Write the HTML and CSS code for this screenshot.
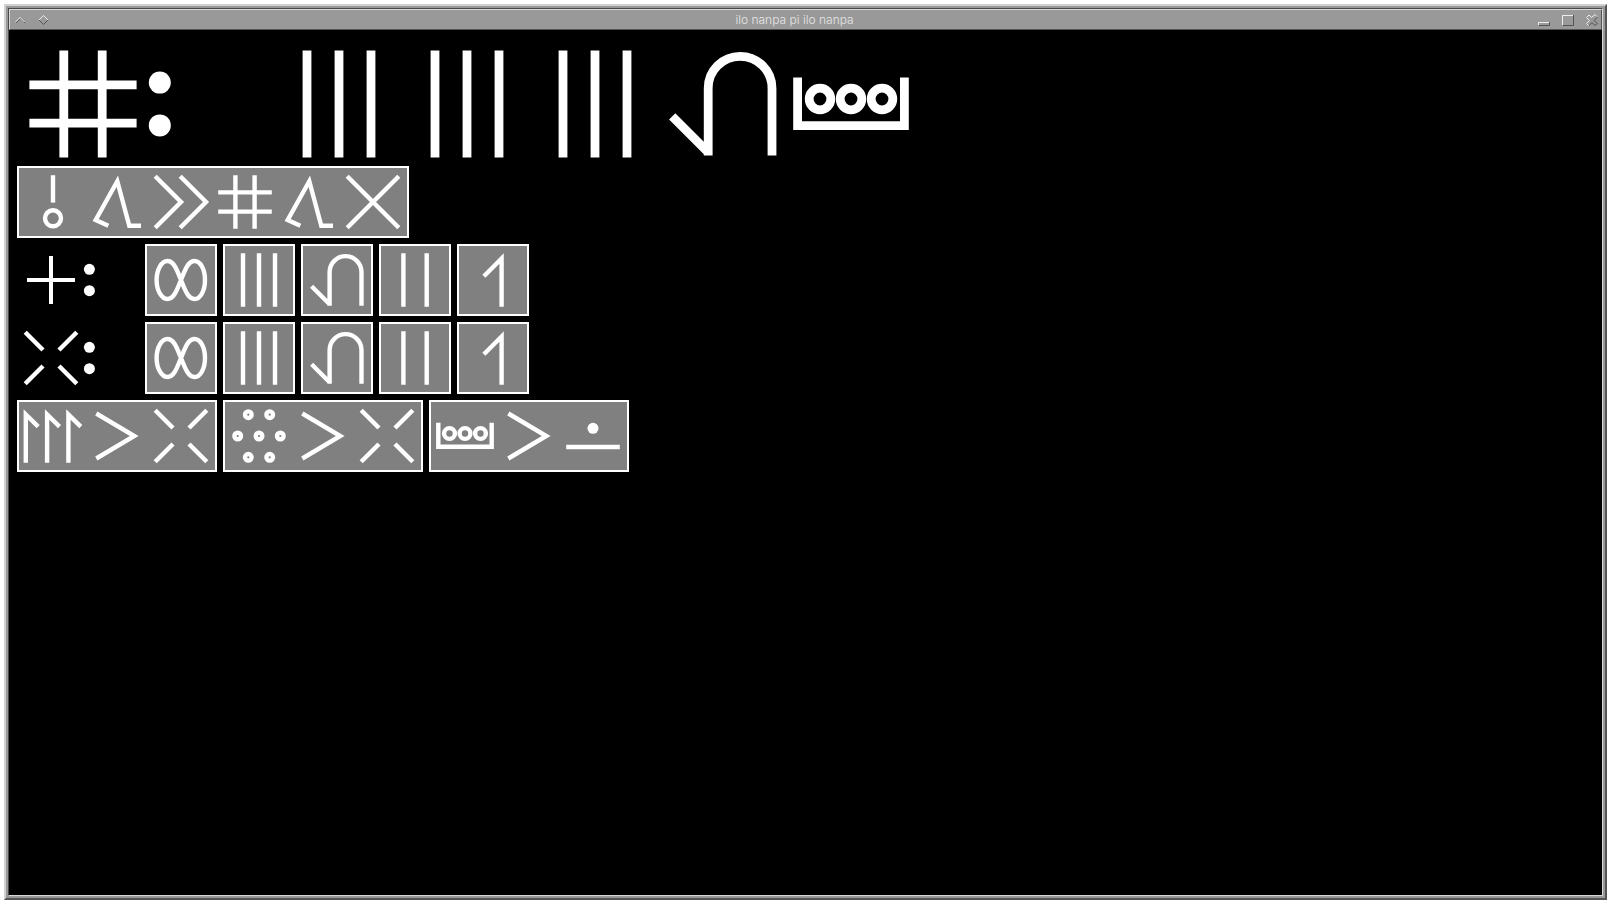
FILE: index.html
```html
<!DOCTYPE html>
<html lang="tok">
<head>
<meta charset="utf-8">
<title>ilo nanpa pi ilo nanpa</title>
<link rel="stylesheet" href="styles.css">
</head>
<body>
<svg class="defs" aria-hidden="true">
  <defs>
    <symbol id="hash" overflow="visible"><path d="M22.4 5.2V58.8M41.6 5.2V58.8M5.2 22.4H58.8M5.2 41.6H58.8"/></symbol>
    <symbol id="colon" overflow="visible"><g class="solid"><circle cx="6.4" cy="21.3" r="5.5"/><circle cx="6.4" cy="42.7" r="5.5"/></g></symbol>
    <symbol id="three" overflow="visible"><path d="M16 5.2V58.8M32 5.2V58.8M48 5.2V58.8"/></symbol>
    <symbol id="two" overflow="visible"><path d="M20.4 5.2V58.8M43.7 5.2V58.8"/></symbol>
    <symbol id="one" overflow="visible"><path d="M40.6 58.8V10.5L22.9 28.2"/></symbol>
    <symbol id="arch" overflow="visible"><path d="M6.6 38.2L24.6 56.2M24.6 57.8V24.1A15.95 15.95 0 0 1 56.5 24.1V57.8"/></symbol>
    <symbol id="box" overflow="visible"><path d="M5.3 18.8V42.8H58.7V18.8"/><circle cx="16.5" cy="29.5" r="5.4"/><circle cx="32" cy="29.5" r="5.4"/><circle cx="47.5" cy="29.5" r="5.4"/></symbol>
    <symbol id="bang" overflow="visible"><path d="M32 5.2V32.6"/><circle cx="32" cy="48.3" r="8"/></symbol>
    <symbol id="legs" overflow="visible"><path d="M23.3 55.7L10.7 50L32.3 11.2L44.3 55.7H56"/></symbol>
    <symbol id="chevrons" overflow="visible"><path d="M6.2 6.2L32 32L6.2 57.8M31.2 6.2L57 32L31.2 57.8"/></symbol>
    <symbol id="cross" overflow="visible"><path d="M6.2 6.2L57.8 57.8M57.8 6.2L6.2 57.8"/></symbol>
    <symbol id="plus" overflow="visible"><path class="thin" d="M8 32H56M32 8V56"/></symbol>
    <symbol id="rays" overflow="visible"><path d="M6.2 6.2L24 24M57.8 6.2L40 24M6.2 57.8L24 40M57.8 57.8L40 40"/></symbol>
    <symbol id="infinity" overflow="visible"><path d="M32 32C28 22 25 13 18.4 13C12.6 13 7.600 21.5 7.600 32C7.600 42.5 12.6 51 18.4 51C25 51 28 42 32 32C36 22 39 13 45.6 13C51.4 13 56 21.5 56 32C56 42.5 51.4 51 45.6 51C39 51 36 42 32 32Z"/></symbol>
    <symbol id="flags" overflow="visible"><path d="M4.8 58.8V10.5L17.2 22.6M26.1 58.8V10.5L38.5 22.6M47.4 58.8V10.5L59.8 22.6"/></symbol>
    <symbol id="greater" overflow="visible"><path d="M11.3 9.5L49.3 32L11.3 54.5"/></symbol>
    <symbol id="beads" overflow="visible"><circle cx="21.3" cy="10.7" r="3.3"/><circle cx="42.7" cy="10.7" r="3.3"/><circle cx="10.7" cy="32" r="3.3"/><circle cx="32" cy="32" r="3.3"/><circle cx="53.3" cy="32" r="3.3"/><circle cx="21.3" cy="53.3" r="3.3"/><circle cx="42.7" cy="53.3" r="3.3"/></symbol>
    <symbol id="above" overflow="visible"><circle class="solid" cx="32" cy="24.3" r="5.5"/><path d="M5.2 43H58.8"/></symbol>
  </defs>
</svg>
<div class="frame">
  <div class="bevel">
    <header class="titlebar">
      <div class="controls">
        <button class="control" aria-label="Menu"><svg class="icon" viewBox="0 0 12 12"><path class="dark" d="M1 9L5.500 4.500L10 9"/><path class="light" d="M.5 8L5 3.500L9.500 8"/></svg></button>
        <button class="control" aria-label="Stick"><svg class="icon" viewBox="0 0 12 12"><path class="light" d="M0 6L4.500 1.500L9 6"/><path class="dark" d="M0 6L4.500 10.500L9 6"/></svg></button>
      </div>
      <h1 class="title">ilo nanpa pi ilo nanpa</h1>
      <div class="controls">
        <button class="control" aria-label="Minimize"><svg class="icon" viewBox="0 0 12 12"><path class="light" d="M.5 11V8.500H11"/><path class="dark" d="M1 11.500H11.500V8"/></svg></button>
        <button class="control" aria-label="Maximize"><svg class="icon" viewBox="0 0 12 12"><path class="light" d="M.5 11V1.500H11"/><path class="dark" d="M1 11.500H11.500V1"/></svg></button>
        <button class="control" aria-label="Close"><svg class="icon" viewBox="0 0 12 12"><path class="light" d="M5.500 3.500L3 1L.5 3.500L3.500 6.500L.5 9.500L2.500 11.500M5.500 3.500L9 .5L11 2.500"/><path class="dark" d="M11.500 3L8 6.500L11.500 9.500L9 11.500L6 8.700L3 11.500"/></svg></button>
      </div>
    </header>
    <main class="calculator">
      <div class="display" role="img" aria-label="nanpa">
        <svg class="digit" viewBox="0 -1 64 61"><use href="#hash"/></svg>
        <svg class="digit" viewBox="0 -1 64 61"><use href="#colon"/></svg>
        <svg class="digit" viewBox="0 -1 64 61"><use href="#three"/></svg>
        <svg class="digit" viewBox="0 -1 64 61"><use href="#three"/></svg>
        <svg class="digit" viewBox="0 -1 64 61"><use href="#three"/></svg>
        <svg class="digit" viewBox="0 -1 64 61"><use href="#arch"/></svg>
        <svg class="digit" viewBox="0 -1 64 61"><use href="#box"/></svg>
      </div>
      <div class="row">
        <button class="key" aria-label="o tawa nanpa tawa ala"><svg class="glyph"><use href="#bang"/></svg><svg class="glyph"><use href="#legs"/></svg><svg class="glyph"><use href="#chevrons"/></svg><svg class="glyph"><use href="#hash"/></svg><svg class="glyph"><use href="#legs"/></svg><svg class="glyph"><use href="#cross"/></svg></button>
      </div>
      <div class="row">
        <div class="label" role="img" aria-label="en"><svg class="glyph"><use href="#plus"/></svg><svg class="glyph"><use href="#colon"/></svg></div>
        <button class="key" aria-label="ale"><svg class="glyph"><use href="#infinity"/></svg></button>
        <button class="key" aria-label="mute"><svg class="glyph"><use href="#three"/></svg></button>
        <button class="key" aria-label="luka"><svg class="glyph"><use href="#arch"/></svg></button>
        <button class="key" aria-label="tu"><svg class="glyph"><use href="#two"/></svg></button>
        <button class="key" aria-label="wan"><svg class="glyph"><use href="#one"/></svg></button>
      </div>
      <div class="row">
        <div class="label" role="img" aria-label="weka"><svg class="glyph"><use href="#rays"/></svg><svg class="glyph"><use href="#colon"/></svg></div>
        <button class="key" aria-label="ale"><svg class="glyph"><use href="#infinity"/></svg></button>
        <button class="key" aria-label="mute"><svg class="glyph"><use href="#three"/></svg></button>
        <button class="key" aria-label="luka"><svg class="glyph"><use href="#arch"/></svg></button>
        <button class="key" aria-label="tu"><svg class="glyph"><use href="#two"/></svg></button>
        <button class="key" aria-label="wan"><svg class="glyph"><use href="#one"/></svg></button>
      </div>
      <div class="row">
        <button class="key" aria-label="kulupu wan li weka"><svg class="glyph"><use href="#flags"/></svg><svg class="glyph"><use href="#greater"/></svg><svg class="glyph"><use href="#rays"/></svg></button>
        <button class="key" aria-label="ko li weka"><svg class="glyph"><use href="#beads"/></svg><svg class="glyph"><use href="#greater"/></svg><svg class="glyph"><use href="#rays"/></svg></button>
        <button class="key" aria-label="poki li sewi"><svg class="glyph"><use href="#box"/></svg><svg class="glyph"><use href="#greater"/></svg><svg class="glyph"><use href="#above"/></svg></button>
      </div>
    </main>
  </div>
</div>
</body>
</html>
```
FILE: styles.css
```css
* {
  box-sizing: border-box;
}

body {
  display: flex;
  min-height: 100vh;
  margin: 0;
  padding: 4px;
  background: #fff;
}

.defs {
  position: absolute;
  width: 0;
  height: 0;
}

.frame {
  display: flex;
  flex: 1;
  border: 2px solid;
  border-color: #d0d0d0 #555 #555 #d0d0d0;
  padding: 2px;
  background: #999;
}

.bevel {
  display: flex;
  flex: 1;
  flex-direction: column;
  border: 1px solid;
  border-color: #4a4a4a #d8d8d8 #d8d8d8 #4a4a4a;
  background: #000;
}

.titlebar {
  display: flex;
  align-items: center;
  justify-content: space-between;
  height: 21px;
  padding: 0 3px 0 5px;
  border: 1px solid;
  border-color: #d8d8d8 #555 #555 #d8d8d8;
  background: #999;
}

.controls {
  display: flex;
  gap: 12px;
}

.control {
  display: flex;
  padding: 0;
  border: 0;
  background: none;
}

.icon {
  width: 12px;
  height: 12px;
  fill: none;
}

.light {
  stroke: #eee;
}

.dark {
  stroke: #555;
}

.title {
  margin: 0;
  color: #e6e6e6;
  font: 12px/18px Inter, "Liberation Sans", Arial, sans-serif;
  font-weight: 300;
}

.calculator {
  display: flex;
  flex: 1;
  flex-direction: column;
  gap: 6px;
  padding: 8px;
}

.display {
  display: flex;
  padding-left: 2px;
}

.row {
  display: flex;
  gap: 6px;
}

.digit,
.glyph {
  flex: none;
  fill: none;
  stroke: #fff;
  stroke-width: 4.4;
}

.digit {
  width: 128px;
  height: 122px;
}

.glyph {
  width: 64px;
  height: 64px;
}

.solid {
  fill: #fff;
  stroke: none;
}

.thin {
  stroke-width: 4;
}

.label {
  display: flex;
  align-items: center;
  width: 122px;
  padding-left: 2px;
}

.key {
  display: flex;
  padding: 2px;
  border: 2px solid #fff;
  background: #808080;
}
```
